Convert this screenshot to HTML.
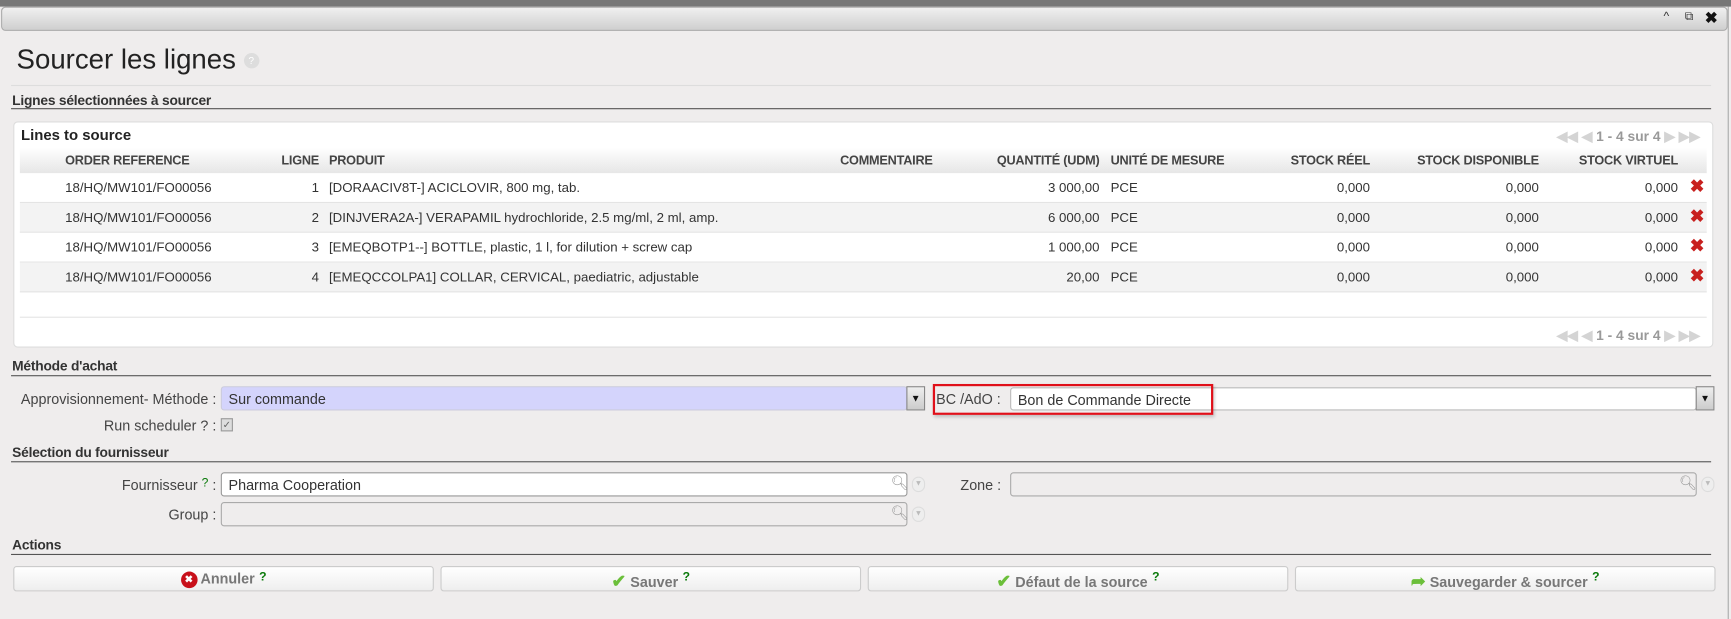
<!DOCTYPE html>
<html><head><meta charset="utf-8">
<style>
*{box-sizing:border-box;margin:0;padding:0}
html,body{width:1731px;height:619px;overflow:hidden;background:#efeded}
#w{position:absolute;left:0;top:0;width:1568px;height:561px;transform:scale(1.10395,1.1034);transform-origin:0 0;font-family:"Liberation Sans",Arial,sans-serif;color:#333;font-size:12px}
.a{position:absolute}
.top{left:0;top:0;width:1568px;height:6px;background:#777}
.bar{left:1px;top:6px;width:1564px;height:22px;background:linear-gradient(#f0f0f0,#cfcfcf);border:1px solid #aaa;border-radius:4px}
.rb{left:1565px;top:6px;width:1px;height:555px;background:#aaa}
h1{position:absolute;left:15px;top:40px;font-size:25px;font-weight:normal;color:#222}
.hl{height:1px;background:#555}
.sec{font-weight:bold;font-size:12.5px;color:#333;letter-spacing:-0.2px}
.box{left:12px;top:110px;width:1540px;height:205px;background:#fff;border:1px solid #ddd;border-radius:4px}
.hdr{left:18px;top:134px;width:1528px;height:23px;background:linear-gradient(#fff,#e6e6e6);font-weight:bold;font-size:11.5px;color:#444;letter-spacing:-0.2px}
.row{left:18px;width:1528px;height:27px;border-bottom:1px solid #e4e4e4;font-size:12px;color:#333}
.c{position:absolute;top:6px;white-space:nowrap}
.r{text-align:right}
.x{color:#c8201e;font-weight:bold;font-size:16px;top:2px}
.inp{height:22px;border:1px solid #bbb;border-radius:3px;background:#fff;font-size:13px;padding:3px 6px}
.lab{font-size:13px;color:#444;text-align:right}
.btn{top:513px;height:23px;width:381px;border:1px solid #ccc;border-radius:3px;background:linear-gradient(#fff,#eee);text-align:center;font-weight:bold;font-size:13px;color:#777;padding-top:3px}
.q{color:#0a7a0a;font-weight:bold;font-size:11px;vertical-align:top;margin-left:4px}
.pg{color:#999;font-weight:bold;font-size:12.5px}
.ic{color:#d4d4d4}
.dd{width:17px;height:22px;background:linear-gradient(#eee,#ccc);border:1px solid #888;font-size:9px;text-align:center;line-height:20px;color:#111}
.circ{width:12px;height:14px;border-radius:6px;background:#eee;border:1px solid #ddd;color:#bbb;font-size:7px;text-align:center;line-height:12px}
</style></head><body><div id="w">
<div class="a top"></div>
<div class="a bar"><span class="a" style="right:52px;top:2px;font-size:11px;color:#333">^</span><span class="a" style="right:30px;top:2px;font-size:11px;color:#333">⧉</span><span class="a" style="right:8px;top:1px;font-size:14px;font-weight:bold;color:#111">✖</span></div>
<div class="a rb"></div>
<h1>Sourcer les lignes <span style="display:inline-block;width:14px;height:14px;border-radius:7px;background:#ddd;color:#fff;font-size:9px;text-align:center;vertical-align:middle;line-height:14px">?</span></h1>
<div class="a" style="left:10px;top:77px;width:1540px;height:1px;background:#ddd"></div>
<div class="a sec" style="left:11px;top:84px">Lignes sélectionnées à sourcer</div>
<div class="a hl" style="left:10px;top:98px;width:1540px"></div>
<div class="a box"></div>
<div class="a" style="left:19px;top:115px;font-weight:bold;font-size:13.5px;color:#222">Lines to source</div>
<div class="a pg" style="left:1410px;top:116px"><span class="ic">◀◀ ◀</span> 1 - 4 sur 4 <span class="ic">▶ ▶▶</span></div>
<div class="a hdr">
<span class="c" style="left:41px">ORDER REFERENCE</span>
<span class="c r" style="right:1257px">LIGNE</span>
<span class="c" style="left:280px">PRODUIT</span>
<span class="c" style="left:743px">COMMENTAIRE</span>
<span class="c r" style="right:550px">QUANTITÉ (UDM)</span>
<span class="c" style="left:988px">UNITÉ DE MESURE</span>
<span class="c r" style="right:305px">STOCK RÉEL</span>
<span class="c r" style="right:152px">STOCK DISPONIBLE</span>
<span class="c r" style="right:26px">STOCK VIRTUEL</span>
</div>
<div class="a row" style="top:157px;background:#fff"><span class="c" style="left:41px">18/HQ/MW101/FO00056</span><span class="c r" style="right:1257px">1</span><span class="c" style="left:280px">[DORAACIV8T-] ACICLOVIR, 800 mg, tab.</span><span class="c r" style="right:550px">3 000,00</span><span class="c" style="left:988px">PCE</span><span class="c r" style="right:305px">0,000</span><span class="c r" style="right:152px">0,000</span><span class="c r" style="right:26px">0,000</span><span class="c x" style="right:2px">✖</span></div>
<div class="a row" style="top:184px;background:#f3f3f3"><span class="c" style="left:41px">18/HQ/MW101/FO00056</span><span class="c r" style="right:1257px">2</span><span class="c" style="left:280px">[DINJVERA2A-] VERAPAMIL hydrochloride, 2.5 mg/ml, 2 ml, amp.</span><span class="c r" style="right:550px">6 000,00</span><span class="c" style="left:988px">PCE</span><span class="c r" style="right:305px">0,000</span><span class="c r" style="right:152px">0,000</span><span class="c r" style="right:26px">0,000</span><span class="c x" style="right:2px">✖</span></div>
<div class="a row" style="top:211px;background:#fff"><span class="c" style="left:41px">18/HQ/MW101/FO00056</span><span class="c r" style="right:1257px">3</span><span class="c" style="left:280px">[EMEQBOTP1--] BOTTLE, plastic, 1 l, for dilution + screw cap</span><span class="c r" style="right:550px">1 000,00</span><span class="c" style="left:988px">PCE</span><span class="c r" style="right:305px">0,000</span><span class="c r" style="right:152px">0,000</span><span class="c r" style="right:26px">0,000</span><span class="c x" style="right:2px">✖</span></div>
<div class="a row" style="top:238px;background:#f3f3f3"><span class="c" style="left:41px">18/HQ/MW101/FO00056</span><span class="c r" style="right:1257px">4</span><span class="c" style="left:280px">[EMEQCCOLPA1] COLLAR, CERVICAL, paediatric, adjustable</span><span class="c r" style="right:550px">20,00</span><span class="c" style="left:988px">PCE</span><span class="c r" style="right:305px">0,000</span><span class="c r" style="right:152px">0,000</span><span class="c r" style="right:26px">0,000</span><span class="c x" style="right:2px">✖</span></div>
<div class="a" style="left:18px;top:287px;width:1528px;height:1px;background:#e4e4e4"></div>
<div class="a pg" style="left:1410px;top:296px"><span class="ic">◀◀ ◀</span> 1 - 4 sur 4 <span class="ic">▶ ▶▶</span></div>

<div class="a sec" style="left:11px;top:325px">Méthode d'achat</div>
<div class="a hl" style="left:10px;top:340px;width:1540px"></div>
<div class="a lab" style="left:0;width:196px;top:354px">Approvisionnement- Méthode :</div>
<div class="a inp" style="left:200px;top:350px;width:622px;background:#d4d4fc;border-color:#ccd">Sur commande</div>
<div class="a dd" style="left:821px;top:350px">▼</div>
<div class="a lab" style="left:848px;top:354px">BC /AdO :</div>
<div class="a inp" style="left:915px;top:351px;width:622px;height:21px">Bon de Commande Directe</div>
<div class="a dd" style="left:1536px;top:350px">▼</div>
<div class="a" style="left:845px;top:348px;width:254px;height:28px;border:2px solid #e0101a;box-shadow:1px 2px 3px rgba(0,0,0,.2)"></div>
<div class="a lab" style="left:0;width:196px;top:378px">Run scheduler ? :</div>
<div class="a" style="left:200px;top:379px;width:11px;height:12px;border:1px solid #999;background:#ddd;font-size:9px;color:#666;line-height:10px;text-align:center">✓</div>

<div class="a sec" style="left:11px;top:403px">Sélection du fournisseur</div>
<div class="a hl" style="left:10px;top:418px;width:1540px"></div>
<div class="a lab" style="left:0;width:196px;top:432px">Fournisseur <span style="color:#0a7a0a;font-size:11px;vertical-align:top">?</span> :</div>
<div class="a inp" style="left:200px;top:428px;width:622px;border-color:#999">Pharma Cooperation</div>
<div class="a" style="left:807px;top:430px;color:#999;font-size:13px">🔍︎</div>
<div class="a circ" style="left:826px;top:432px">▼</div>
<div class="a lab" style="left:870px;top:432px">Zone :</div>
<div class="a inp" style="left:915px;top:428px;width:622px;background:#efeded;border-color:#aaa"></div>
<div class="a" style="left:1521px;top:430px;color:#999;font-size:13px">🔍︎</div>
<div class="a circ" style="left:1541px;top:432px">▼</div>
<div class="a lab" style="left:0;width:196px;top:459px">Group :</div>
<div class="a inp" style="left:200px;top:455px;width:622px;background:#efeded;border-color:#aaa"></div>
<div class="a" style="left:807px;top:457px;color:#999;font-size:13px">🔍︎</div>
<div class="a circ" style="left:826px;top:459px">▼</div>

<div class="a sec" style="left:11px;top:487px">Actions</div>
<div class="a hl" style="left:10px;top:502px;width:1540px"></div>
<div class="a btn" style="left:12px"><span style="display:inline-block;width:15px;height:15px;border-radius:8px;background:#c8101a;color:#fff;font-size:9px;line-height:15px;vertical-align:middle">✖</span> Annuler<span class="q">?</span></div>
<div class="a btn" style="left:399px"><span style="color:#6bbf3a;font-size:16px">✔</span> Sauver<span class="q">?</span></div>
<div class="a btn" style="left:786px"><span style="color:#6bbf3a;font-size:16px">✔</span> Défaut de la source<span class="q">?</span></div>
<div class="a btn" style="left:1173px"><span style="color:#6bbf3a;font-size:16px">➦</span> Sauvegarder &amp; sourcer<span class="q">?</span></div>
</div></body></html>
